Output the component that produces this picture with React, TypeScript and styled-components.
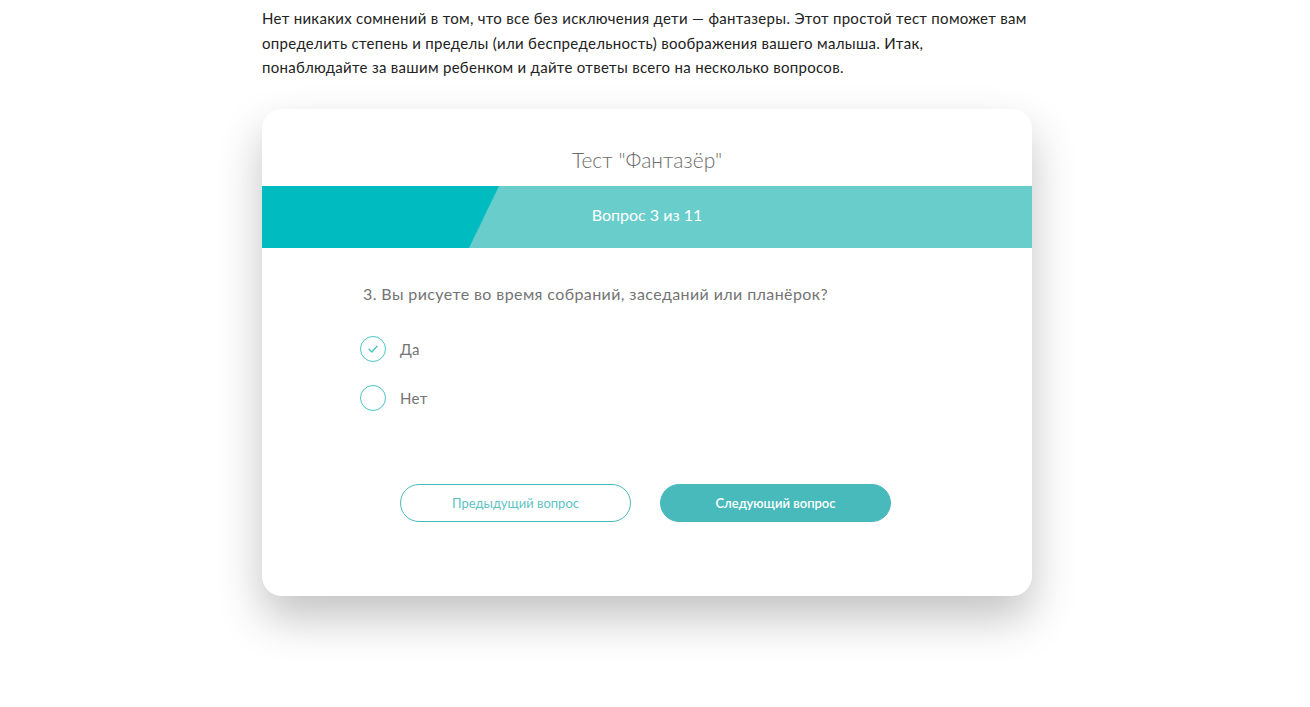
import React from "react";
import styled, { createGlobalStyle } from "styled-components";

const Global = createGlobalStyle`
  html, body { margin: 0; padding: 0; background: #fff; }
  body { font-family: Lato, "Open Sans", sans-serif; }
`;

const Page = styled.div`
  width: 770px;
  margin-left: 262px;
  padding: 6px 0 111px;
`;

const Intro = styled.p`
  margin: 0 0 29px;
  font-size: 15px;
  line-height: 24.5px;
  letter-spacing: 0.3px;
  color: #222;
  white-space: nowrap;
`;

const Card = styled.div`
  background: #fff;
  border-radius: 20px;
  box-shadow: 0 22px 45px rgba(0, 0, 0, 0.24);
  padding: 36px 0 74px;
  overflow: hidden;
`;

const Title = styled.h2`
  margin: 0 0 11px;
  text-align: center;
  font-weight: 300;
  font-size: 21px;
  line-height: 30px;
  color: #6b6b6b;
`;

const Band = styled.div`
  position: relative;
  height: 62px;
  background: #68cdcb;
  display: flex;
  align-items: center;
  justify-content: center;
`;

const Progress = styled.svg`
  position: absolute;
  left: 0;
  top: 0;
`;

const BandText = styled.span`
  position: relative;
  top: -2px;
  color: #fff;
  font-size: 16px;
`;

const Body = styled.div`
  padding: 36px 0 0 98px;
`;

const Question = styled.div`
  font-size: 16px;
  letter-spacing: 0.4px;
  color: #747474;
  padding-left: 3px;
  margin-bottom: 33px;
`;

const Option = styled.label`
  display: flex;
  align-items: center;
  gap: 14px;
  height: 26px;
  margin-bottom: 23px;
  font-size: 15px;
  letter-spacing: 0.3px;
  color: #747474;
`;

const Circle = styled.span`
  width: 24px;
  height: 24px;
  border-radius: 50%;
  border: 1px solid #4cc3c4;
  display: flex;
  align-items: center;
  justify-content: center;
`;

const Buttons = styled.div`
  display: flex;
  gap: 29px;
  margin: 73px 0 0 40px;
`;

const Button = styled.button<{ $primary?: boolean }>`
  width: 231px;
  height: 38px;
  border-radius: 19px;
  font-family: inherit;
  font-size: 13px;
  border: 1px solid #48babc;
  background: ${(p) => (p.$primary ? "#48babc" : "#fff")};
  color: ${(p) => (p.$primary ? "#fff" : "#5dc3c4")};
  font-weight: ${(p) => (p.$primary ? 600 : 400)};
  cursor: pointer;
`;

export default function App() {
  return (
    <>
      <Global />
      <Page>
        <Intro>
          Нет никаких сомнений в том, что все без исключения дети — фантазеры. Этот простой тест поможет вам
          <br />
          определить степень и пределы (или беспредельность) воображения вашего малыша. Итак,
          <br />
          понаблюдайте за вашим ребенком и дайте ответы всего на несколько вопросов.
        </Intro>
        <Card>
          <Title>Тест "Фантазёр"</Title>
          <Band>
            <Progress width="240" height="62" viewBox="0 0 240 62">
              <polygon points="0,0 237,0 207,62 0,62" fill="#00bcc1" />
            </Progress>
            <BandText>Вопрос 3 из 11</BandText>
          </Band>
          <Body>
            <Question>3. Вы рисуете во время собраний, заседаний или планёрок?</Question>
            <Option>
              <Circle>
                <svg width="12" height="12" viewBox="0 0 12 12">
                  <path d="M2 6.3 L4.8 9 L10 3.2" fill="none" stroke="#4cc3c4" strokeWidth="1.4" strokeLinecap="round" strokeLinejoin="round" />
                </svg>
              </Circle>
              Да
            </Option>
            <Option>
              <Circle />
              Нет
            </Option>
            <Buttons>
              <Button>Предыдущий вопрос</Button>
              <Button $primary>Следующий вопрос</Button>
            </Buttons>
          </Body>
        </Card>
      </Page>
    </>
  );
}
